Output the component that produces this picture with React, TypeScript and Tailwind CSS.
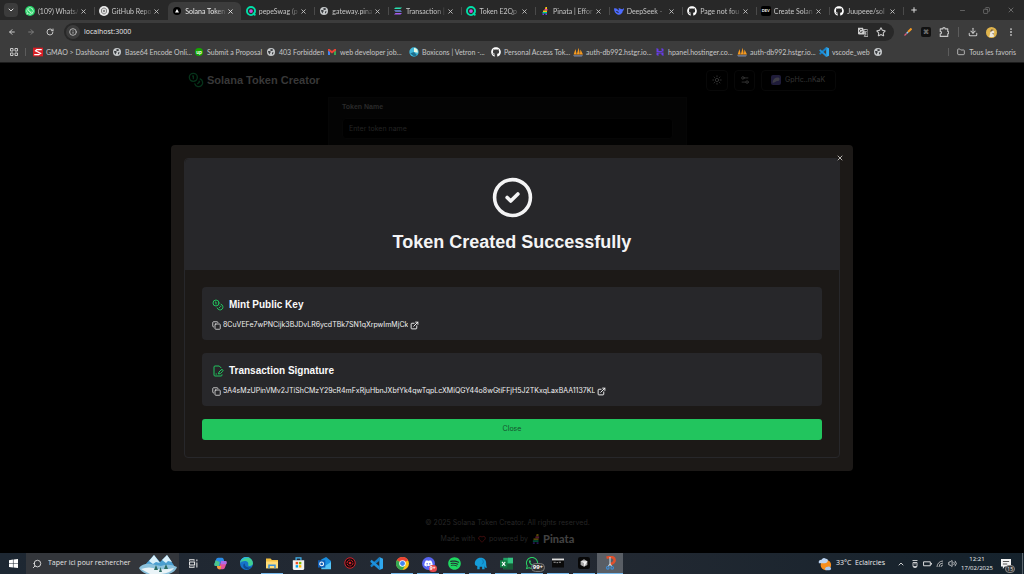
import type { ReactNode } from "react";
import {
  ArrowLeft,
  ArrowRight,
  ChevronDown,
  ChevronUp,
  CircleCheck,
  Coins,
  Copy,
  Download,
  EllipsisVertical,
  ExternalLink,
  Folder,
  Heart,
  Info,
  Minus,
  Plus,
  RotateCw,
  Search,
  Settings2,
  Star,
  Sun,
  Volume2,
  X,
} from "lucide-react";
import { FaGithub, FaWhatsapp, FaSpotify, FaDiscord } from "react-icons/fa";

type P = { className?: string };

const GlobeIcon = ({ className = "size-2" }: P) => (
  <svg viewBox="0 0 16 16" className={className}>
    <circle cx="8" cy="8" r="8" fill="#c4c7c9" />
    <path d="M2 6l4 0 2 2-2 2v3l-3-3zM8 2l4 1-1 3-3 0-2-2zM10 9l3-1-1 4-2 1z" fill="#3a3d40" />
  </svg>
);
const WhatsIcon = () => (
  <span className="flex size-2.5 items-center justify-center rounded-full bg-[#25d366] text-white">
    <FaWhatsapp className="size-2" />
  </span>
);
const GithubIcon = () => <FaGithub className="size-2.5 text-white" />;
const NextIcon = () => (
  <svg viewBox="0 0 16 16" className="size-2">
    <circle cx="8" cy="8" r="8" fill="#000" />
    <path d="M8 4l4 7H4z" fill="#fff" />
  </svg>
);
const RepoIcon = () => (
  <svg viewBox="0 0 16 16" className="size-2.5">
    <circle cx="8" cy="8" r="8" fill="#e9e9e9" />
    <path d="M8 3l4 2.300v5L8 13l-4-2.700v-5z" fill="none" stroke="#777" strokeWidth="1.500" />
    <circle cx="8" cy="8" r="2" fill="#888" />
  </svg>
);
const SolscanIcon = () => (
  <svg viewBox="0 0 16 16" className="size-2.5">
    <circle cx="8" cy="8" r="6.500" fill="none" stroke="#00e0a8" strokeWidth="3" />
    <circle cx="8" cy="8" r="3" fill="#c84bd8" />
    <path d="M11 11l4 4" stroke="#00e0a8" strokeWidth="2.500" />
  </svg>
);
const SolanaIcon = () => (
  <svg viewBox="0 0 16 16" className="size-2">
    <path d="M3 1h13l-3 3H0z" fill="#28e0b0" />
    <path d="M0 6.500h13l3 3H3z" fill="#6c8ee0" />
    <path d="M3 12h13l-3 3H0z" fill="#a45cf0" />
  </svg>
);
const PinataIcon = ({ className = "size-2" }: P) => (
  <svg viewBox="0 0 16 16" className={className}>
    <path d="M9 0h3v4H8z" fill="#f5c518" />
    <path d="M7 4h6v3H7z" fill="#ee4390" />
    <path d="M4 7h8v3H4z" fill="#f5c518" />
    <path d="M3 10h9v3H3z" fill="#00cc92" />
    <path d="M3 13h3v3H3zM9 13h3v3H9z" fill="#6d3be4" />
  </svg>
);
const DeepSeekIcon = () => (
  <svg viewBox="0 0 16 16" className="size-2.5">
    <path d="M0 4c3-1 5 0 7 3 1-1 1-3 0-4 3 0 4 2 6 2 1 0 2-1 3-2 0 3-1 4-2 5 0 3-3 6-6 6C4 14 0 10 0 4z" fill="#4d6bfe" />
    <path d="M3 8c2 0 4 1 5 3-2 0-4-1-5-3z" fill="#282828" />
  </svg>
);
const DevIcon = () => (
  <span className="flex h-2.5 w-2.5 items-center justify-center rounded-xs bg-black text-[4px] font-bold text-white">DEV</span>
);
const GmaoIcon = () => (
  <svg viewBox="0 0 16 16" className="size-2.5">
    <path d="M0 1h16v14H0z" fill="#d91f26" />
    <path d="M14 4H6L4 6l8 4-3 2H2" fill="none" stroke="#fff" strokeWidth="2" />
  </svg>
);
const UpworkIcon = () => (
  <span className="flex size-2 items-center justify-center rounded-full bg-[#14a800] text-[5px] leading-none font-bold text-white">up</span>
);
const GmailIcon = () => (
  <svg viewBox="0 0 16 12" className="size-2">
    <path d="M0 1v11h4V5z" fill="#4285f4" />
    <path d="M16 1v11h-4V5z" fill="#34a853" />
    <path d="M0 0h3l5 4 5-4h3v3L8 9 0 3z" fill="#ea4335" />
  </svg>
);
const BoxiconsIcon = () => (
  <svg viewBox="0 0 16 16" className="size-2.5">
    <circle cx="8" cy="8" r="7.500" fill="#3fb6d8" />
    <path d="M8 1a7 7 0 0 1 6 8L8 8z" fill="#e8f8e0" />
    <path d="M2 10l6-2 5 5-5 2z" fill="#1d6f8c" />
  </svg>
);
const PmaIcon = () => (
  <svg viewBox="0 0 16 16" className="size-2.5">
    <path d="M1 12L4 3l2 9zM6 12L9 1l2 11zM11 12l1-8 4 8z" fill="#f79a1f" />
    <path d="M0 13h16l-2 2H2z" fill="#7b87a6" />
  </svg>
);
const HostingerIcon = () => (
  <svg viewBox="0 0 16 16" className="size-2">
    <path d="M1 0l4 2v4h6l4 2H1zM11 0l4 2v5l-4-2zM1 9h14v7l-4-2v-3H5v5l-4-2z" fill="#673de6" />
  </svg>
);
const VscodeIcon = ({ className = "size-2.5" }: P) => (
  <svg viewBox="0 0 16 16" className={className}>
    <path d="M11.500 0L16 2v12l-4.500 2z" fill="#2fa8ee" />
    <path d="M11.500 0v4.500L2 12.500.500 11V10z" fill="#1580c8" />
    <path d="M11.500 16v-4.500L2 3.500.500 5v1z" fill="#1f92dd" />
  </svg>
);

const tabs: { icon: ReactNode; title: string; active?: boolean }[] = [
  { icon: <WhatsIcon />, title: "(109) Whats/" },
  { icon: <RepoIcon />, title: "GitHub Repo" },
  { icon: <NextIcon />, title: "Solana Token", active: true },
  { icon: <SolscanIcon />, title: "pepeSwag (p" },
  { icon: <GlobeIcon />, title: "gateway.pina" },
  { icon: <SolanaIcon />, title: "Transaction |" },
  { icon: <SolscanIcon />, title: "Token E2Qp" },
  { icon: <PinataIcon />, title: "Pinata | Effor" },
  { icon: <DeepSeekIcon />, title: "DeepSeek -" },
  { icon: <GithubIcon />, title: "Page not fou" },
  { icon: <DevIcon />, title: "Create Solan" },
  { icon: <GithubIcon />, title: "Juupeee/sol" },
];

function TabStrip() {
  return (
    <div className="flex h-5 items-stretch bg-[#282828] font-['Lato',sans-serif]">
      <div className="flex w-[21px] shrink-0 items-center pl-1">
        <button aria-label="Search tabs" className="flex h-3.5 w-3.5 items-center justify-center rounded bg-[#3c3c3c] text-[#e3e3e3]">
          <ChevronDown className="size-2" strokeWidth={3} />
        </button>
      </div>
      <div className="flex min-w-0 flex-1">
        {tabs.map((t, i) => (
          <div key={i} className="flex min-w-0 flex-1 pt-[2px]">
            <div
              className={
                t.active
                  ? "flex min-w-0 flex-1 items-center rounded-t-md bg-[#3c3c3c] pl-1 text-[#e8e8e8]"
                  : "flex min-w-0 flex-1 items-center pl-1 text-[#c7c7c7]"
              }
            >
              <span className="flex w-2.5 shrink-0 justify-center">{t.icon}</span>
              <span className="ml-[3px] min-w-0 flex-1 overflow-hidden text-[7px] leading-3 whitespace-nowrap [mask-image:linear-gradient(to_right,black_75%,rgba(0,0,0,0.2))]">
                {t.title}
              </span>
              <button aria-label="Close tab" className="mr-[7px] ml-0.5 shrink-0">
                <X className="size-[7px]" strokeWidth={3} />
              </button>
            </div>
            <span className={t.active || tabs[i + 1]?.active ? "my-auto h-2 w-px" : "my-auto h-2 w-px bg-[#4a4a4a]"} />
          </div>
        ))}
      </div>
      <div className="flex w-[120px] shrink-0 items-center gap-[17px] pl-1.5 text-[#8a8a8a]">
        <button aria-label="New tab" className="mr-6 text-[#dcdcdc]"><Plus className="size-2" strokeWidth={3} /></button>
        <button aria-label="Minimize"><Minus className="size-[7px]" strokeWidth={2} /></button>
        <button aria-label="Restore"><Copy className="size-[7px] -scale-x-100" strokeWidth={2} /></button>
        <button aria-label="Close window"><X className="size-2" strokeWidth={2} /></button>
      </div>
    </div>
  );
}

function Toolbar() {
  return (
    <div className="flex h-6 items-center bg-[#3c3c3c] pr-2 pl-2 text-[#c7c7c7]">
      <button aria-label="Back"><ArrowLeft className="size-2" strokeWidth={3} /></button>
      <button aria-label="Forward" className="ml-[11px] text-[#7c7c7c]"><ArrowRight className="size-2" strokeWidth={3} /></button>
      <button aria-label="Reload" className="ml-[11px]"><RotateCw className="size-2" strokeWidth={3} /></button>
      <label className="ml-2.5 flex h-[18px] min-w-0 flex-1 items-center rounded-full bg-[#282828] pr-2 pl-0.5">
        <span className="flex size-3.5 items-center justify-center rounded-full bg-[#3c3c3c]"><Info className="size-2" strokeWidth={2.5} /></span>
        <input aria-label="Address" defaultValue="localhost:3000" className="ml-1 min-w-0 flex-1 bg-transparent text-[7px] leading-3 text-[#e8e8e8] outline-none" />
        <svg viewBox="0 0 16 16" className="mr-2 size-2.5">
          <path d="M0 1h8l3 11H2q-2 0-2-2z" fill="#d0d0d0" />
          <path d="M9 4h5q2 0 2 2v9h-6l2-3z" fill="none" stroke="#c7c7c7" strokeWidth="1.400" />
          <path d="M6.500 4.500a2.500 2.500 0 1 0 .500 3H5" fill="none" stroke="#333" strokeWidth="1.300" />
          <path d="M10.500 7.500h4M12.500 6.500v1c0 1.500-1 3-2 4M11.500 9l2.500 3" fill="none" stroke="#c7c7c7" strokeWidth="1.100" />
        </svg>
        <Star className="size-2.5" strokeWidth={2.5} />
      </label>
      <div className="ml-2.5 flex w-28 shrink-0 items-center justify-between">
        <svg viewBox="0 0 16 16" className="size-2">
          <path d="M15 1L8 8" stroke="#f59a23" strokeWidth="4" />
          <path d="M8 8l-3 3" stroke="#8fc8f8" strokeWidth="3" />
          <path d="M5 11l-4 4" stroke="#e05a78" strokeWidth="2.500" />
        </svg>
        <span className="flex size-2.5 items-center justify-center rounded-xs bg-[#111] text-[6px] leading-none text-[#aaa]">⌘</span>
        <svg viewBox="0 0 16 16" className="size-2.5">
          <path d="M2 3h4q0-2 2-2t2 2h4v4q1.500.200 1.500 2T14 11v4H2v-4q2-.200 2-2T2 7z" fill="none" stroke="#c7c7c7" strokeWidth="1.800" strokeLinejoin="round" />
        </svg>
        <span className="h-2.5 w-px bg-[#5c5c5c]" />
        <Download className="size-2.5" strokeWidth={2.5} />
        <svg viewBox="0 0 20 20" className="size-[11px]">
          <circle cx="10" cy="10" r="10" fill="#e0b44c" />
          <path d="M6 18l2-9 3-4 4 3-1 10z" fill="#ece6da" />
          <path d="M7 8l3-4 4 1-4 3zM11 12l3-1v3z" fill="#7b6246" />
        </svg>
        <EllipsisVertical className="size-2.5" strokeWidth={2.5} />
      </div>
    </div>
  );
}

const bookmarks: { icon: ReactNode; label: string; width: string }[] = [
  { icon: <GmaoIcon />, label: "GMAO > Dashboard", width: "w-[79px]" },
  { icon: <GlobeIcon />, label: "Base64 Encode Onli...", width: "w-[82px]" },
  { icon: <UpworkIcon />, label: "Submit a Proposal", width: "w-[72px]" },
  { icon: <GlobeIcon />, label: "403 Forbidden", width: "w-[61px]" },
  { icon: <GmailIcon />, label: "web developer job...", width: "w-[82px]" },
  { icon: <BoxiconsIcon />, label: "Boxicons | Vetron -...", width: "w-[82px]" },
  { icon: <GithubIcon />, label: "Personal Access Tok...", width: "w-[82px]" },
  { icon: <PmaIcon />, label: "auth-db992.hstgr.io...", width: "w-[82px]" },
  { icon: <HostingerIcon />, label: "hpanel.hostinger.co...", width: "w-[82px]" },
  { icon: <PmaIcon />, label: "auth-db992.hstgr.io...", width: "w-[82px]" },
  { icon: <VscodeIcon />, label: "vscode_web", width: "w-[55px]" },
];

function Bookmarks() {
  return (
    <nav aria-label="Bookmarks" className="flex h-[19px] items-center border-b border-[#1c1c1c] bg-[#3c3c3c] pr-2 pb-0.5 pl-2.5 font-['Lato',sans-serif] text-[7px] leading-3 whitespace-nowrap text-[#c7c7c7]">
      <svg viewBox="0 0 16 16" className="size-2 shrink-0">
        <path d="M1 1h5v5H1zM10 1h5v5h-5zM1 10h5v5H1zM10 10h5v5h-5z" fill="none" stroke="#c7c7c7" strokeWidth="2" />
      </svg>
      <span className="mx-[7px] h-2 w-px bg-[#5c5c5c]" />
      {bookmarks.map((b, i) => (
        <a key={i} href="#" className={`${b.width} flex shrink-0 items-center gap-[3px]`}>
          <span className="flex w-2.5 shrink-0 justify-center">{b.icon}</span>
          {b.label}
        </a>
      ))}
      <GlobeIcon />
      <span className="mr-2 ml-auto h-2 w-px bg-[#5c5c5c]" />
      <a href="#" className="flex items-center gap-1"><Folder className="size-2" strokeWidth={2.5} />Tous les favoris</a>
    </nav>
  );
}

function Background() {
  return (
    <div className="flex h-full flex-col">
      <header>
        <div className="mx-auto flex h-[34px] max-w-[648px] items-center">
          <Coins className="size-4 text-[#06331a]" strokeWidth={2} />
          <span className="ml-[3px] text-[11px] leading-4 font-bold text-[#383838]">Solana Token Creator</span>
          <button aria-label="Toggle theme" className="mr-1.5 ml-auto flex h-[21px] w-[22px] items-center justify-center rounded border border-[#080808] text-[#383838]">
            <Sun className="size-2.5" strokeWidth={2} />
          </button>
          <button aria-label="Settings" className="mr-1.5 flex h-[21px] w-[21px] items-center justify-center rounded border border-[#080808] text-[#383838]">
            <Settings2 className="size-2.5" strokeWidth={2} />
          </button>
          <button className="flex h-[21px] w-[75px] items-center gap-1 rounded border border-[#080808] pl-[9px] font-['Inter',sans-serif] text-[7px] text-[#343434]">
            <span className="flex size-2.5 shrink-0 items-center justify-center rounded-xs bg-[#1f1c3a]">
              <svg viewBox="0 0 16 12" className="w-2"><path d="M1 11C2 4 6 1 11 1s5 4 3 6-4 0-6 2-5 3-7 2z" fill="#3c3b44" /></svg>
            </span>
            GpHc..nKaK
          </button>
        </div>
      </header>
      <div className="flex min-h-0 flex-1 flex-col pr-[9px]">
        <main className="mx-auto min-h-0 w-full max-w-[359px] flex-1">
          <div className="h-20 border border-[#060606] bg-[#040404] px-[13px] pt-1">
            <label htmlFor="token-name" className="block text-[7px] leading-2.5 font-bold text-[#2a2a2a]">Token Name</label>
            <input id="token-name" placeholder="Enter token name" className="mt-[6px] block h-[21px] w-full rounded border border-[#060606] bg-black px-1.5 font-['Inter',sans-serif] text-[7px] text-[#444] placeholder:text-[#242424]" />
          </div>
        </main>
        <footer className="pb-1.5 text-center font-['Inter',sans-serif] text-[7px] leading-4 text-[#262626]">
          <p>© 2025 Solana Token Creator. All rights reserved.</p>
          <p className="flex items-center justify-center gap-[3px]">
            Made with <Heart className="size-2 text-[#4a1010]" strokeWidth={2.5} /> powered by
            <span className="flex items-center gap-0.5 font-['Lato'] text-[11px] font-black text-[#414141]">
              <PinataIcon className="size-2.5 opacity-35" />Pinata
            </span>
          </p>
        </footer>
      </div>
    </div>
  );
}

const SignIcon = () => (
  <svg viewBox="0 0 24 24" fill="none" stroke="currentColor" strokeWidth="2" strokeLinecap="round" strokeLinejoin="round" className="size-3">
    <path d="M20 19.500v.500a2 2 0 0 1-2 2H6a2 2 0 0 1-2-2V4a2 2 0 0 1 2-2h8.500L18 5.500" />
    <path d="M8 18h1" />
    <path d="M18.420 9.610a2.100 2.100 0 1 1 2.970 2.970L16.950 17 13 18l.990-3.950 4.430-4.440Z" />
  </svg>
);

function KeyBox({ icon, title, value }: { icon: ReactNode; title: string; value: string }) {
  return (
    <section className="mb-[13px] h-[53px] rounded bg-[#27272a] px-2.5 pt-3">
      <h3 className="flex items-center gap-[5px] text-[10px] leading-3 font-bold text-[#fafafa]">
        <span className="text-[#22c55e]">{icon}</span>
        {title}
      </h3>
      <div className="mt-2 flex h-3 items-center gap-0.5 font-['Inter',sans-serif] text-[7px] leading-3 text-[#f2f2f2]">
        <button aria-label={`Copy ${title}`}><Copy className="size-[9px]" strokeWidth={2} /></button>
        <span className="truncate">{value}</span>
        <a href="#" aria-label={`Open ${title}`}><ExternalLink className="size-[9px]" strokeWidth={2.5} /></a>
      </div>
    </section>
  );
}

function SuccessDialog() {
  return (
    <div className="absolute inset-0 flex items-center justify-center">
      <div role="dialog" aria-labelledby="dialog-title" className="relative w-full max-w-[682px] rounded bg-[#1c1917] p-[13px]">
        <button aria-label="Dismiss" className="absolute top-[9px] right-[9px] text-[#b8b5b2]"><X className="size-2" strokeWidth={3} /></button>
        <div className="rounded border border-[#27272a]">
          <div className="flex h-[111px] flex-col items-center rounded-t bg-[#27272a] pt-[17px] text-[#f4f4f5]">
            <CircleCheck className="size-[43px]" strokeWidth={2} />
            <h2 id="dialog-title" className="mt-[11px] text-[18px] leading-6 font-bold">Token Created Successfully</h2>
          </div>
          <div className="p-[17px]">
            <KeyBox icon={<Coins className="size-3" />} title="Mint Public Key" value="8CuVEFe7wPNCijk3BJDvLR6ycdTBk7SN1qXrpwImMjCk" />
            <KeyBox
              icon={<SignIcon />}
              title="Transaction Signature"
              value="5A4sMzUPinVMv2JTiShCMzY29cR4mFxRjuHbnJXbfYk4qwTqpLcXMiQGY44o8wGtiFFjH5J2TKxqLaxBAA1137KL"
            />
            <button className="block h-[21px] w-full rounded-[3px] bg-[#22c55e] font-['Inter',sans-serif] text-[7px] text-[#14532d]">Close</button>
          </div>
        </div>
      </div>
    </div>
  );
}

const apps: { name: string; icon: ReactNode; open?: boolean; active?: boolean }[] = [
  {
    name: "Copilot",
    icon: (
      <svg viewBox="0 0 16 16" className="size-[13px]">
        <path d="M5 1h5q1.500 0 2 2l.500 2H9L7 11H2Q0 11 .500 8.500L2.500 3Q3 1 5 1z" fill="#2a8de8" />
        <path d="M.500 8.500L2 4l5 2-1 5H2Q0 11 .500 8.500z" fill="#4cc58a" />
        <path d="M11 15H6q-1.500 0-2-2l-.500-2H7l2-6h5q2 0 1.500 2.500L13.500 13q-.500 2-2.500 2z" fill="#e3539a" />
        <path d="M9 5h5q2 0 1.500 2.500L15 9H8z" fill="#b06be8" />
        <path d="M3.500 11H9l-1 4H6q-1.500 0-2-2z" fill="#f3a13b" />
      </svg>
    ),
  },
  {
    name: "Edge",
    icon: (
      <svg viewBox="0 0 16 16" className="size-[13px]">
        <circle cx="8" cy="8" r="8" fill="#1673c9" />
        <path d="M0 8a8 8 0 0 1 16 0c0 3-5 4-6 2 1-3-1-5-4-5-3 0-5 1-6 3z" fill="#41cf94" />
        <path d="M0 8a8 8 0 0 1 12-7C5 1 1 4 0 8z" fill="#2bb5e0" />
        <path d="M6 8c-1 4 4 6 8 4-3 5-10 3-10-1 0-2 1-3 2-3z" fill="#0d4c92" />
      </svg>
    ),
  },
  {
    name: "Explorer",
    open: true,
    icon: (
      <svg viewBox="0 0 16 14" className="h-3 w-3">
        <path d="M0 1h6l2 2h8v11H0z" fill="#f5c242" />
        <path d="M0 5h16v9H0z" fill="#ffdc78" />
        <path d="M3 14V9h10v5h-2v-3H5v3z" fill="#3a8fd8" />
      </svg>
    ),
  },
  {
    name: "Store",
    icon: (
      <svg viewBox="0 0 16 16" className="size-[13px]">
        <path d="M5 4V1h6v3" fill="none" stroke="#45b5f0" strokeWidth="1.500" />
        <path d="M1 4h14v10q0 2-2 2H3q-2 0-2-2z" fill="#f2f2f2" />
        <path d="M4.500 6H7.500v3h-3z" fill="#f25022" /><path d="M8.500 6h3v3h-3z" fill="#7fba00" />
        <path d="M4.500 10h3v3h-3z" fill="#00a4ef" /><path d="M8.500 10h3v3h-3z" fill="#ffb900" />
      </svg>
    ),
  },
  {
    name: "Outlook",
    icon: (
      <svg viewBox="0 0 16 16" className="size-[13px]">
        <path d="M4 3l6-3 6 5v9H4z" fill="#1a8fe0" /><path d="M4 14l12-8v9H4z" fill="#56c4f5" />
        <path d="M0 4h9v9H0z" fill="#0f5db4" /><circle cx="4.500" cy="8.500" r="2.300" fill="none" stroke="#fff" strokeWidth="1.300" />
      </svg>
    ),
  },
  {
    name: "Recorder",
    icon: (
      <svg viewBox="0 0 16 16" className="size-3">
        <circle cx="8" cy="8" r="7" fill="#17090a" stroke="#d0222c" strokeWidth="1.300" />
        <circle cx="8" cy="8" r="4" fill="none" stroke="#d0222c" strokeWidth="1.300" strokeDasharray="3 1" />
        <circle cx="8" cy="8" r="1.800" fill="#d0222c" />
      </svg>
    ),
  },
  { name: "VS Code", icon: <VscodeIcon className="size-[13px]" /> },
  {
    name: "Chrome",
    open: true,
    icon: (
      <svg viewBox="0 0 16 16" className="size-[13px]">
        <circle cx="8" cy="8" r="8" fill="#fbc116" />
        <path d="M8 8L1.070 4A8 8 0 0 1 14.930 4z" fill="#ea4335" />
        <path d="M8 8L1.070 4A8 8 0 0 0 8 16l4-7z" fill="#34a853" />
        <circle cx="8" cy="8" r="4" fill="#fff" /><circle cx="8" cy="8" r="3" fill="#4285f4" />
      </svg>
    ),
  },
  {
    name: "Discord",
    open: true,
    icon: (
      <span className="relative flex size-[13px] items-center justify-center rounded-full bg-[#5865f2] text-white">
        <FaDiscord className="size-[9px]" />
        <span className="absolute -right-0.5 -bottom-0.5 rounded-full bg-[#e5484d] px-px text-[5px] leading-[7px] font-bold">9+</span>
      </span>
    ),
  },
  { name: "Spotify", open: true, icon: <FaSpotify className="size-[13px] text-[#1ed760]" /> },
  {
    name: "TablePlus",
    open: true,
    icon: (
      <svg viewBox="0 0 16 16" className="size-[13px]">
        <path d="M1 8c0-4 3-7 7-7 5 0 7 3 7 7 0 2 0 3 1 5-2 1-3-1-3-3v5h-3v-3H7v3H4v-4c-2 0-3-1-3-3z" fill="#159bd8" />
        <path d="M10 3c2 2 2 4 0 6" fill="none" stroke="#0b6ea8" />
      </svg>
    ),
  },
  {
    name: "Excel",
    open: true,
    icon: (
      <svg viewBox="0 0 16 16" className="size-[13px]">
        <path d="M4 1h12v14H4z" fill="#21a366" /><path d="M10 1h6v7h-6z" fill="#33c481" /><path d="M4 8h12v7H4z" fill="#185c37" />
        <path d="M0 4h9v9H0z" fill="#107c41" /><path d="M2.500 6l4 5M6.500 6l-4 5" stroke="#fff" strokeWidth="1.300" />
      </svg>
    ),
  },
  {
    name: "WhatsApp",
    open: true,
    icon: (
      <span className="relative">
        <FaWhatsapp className="size-3.5 text-[#2bd366]" />
        <span className="absolute -right-1.5 -bottom-0.5 rounded-full border border-[#777] bg-[#333] px-px text-[6px] leading-[7px] font-bold text-white">99+</span>
      </span>
    ),
  },
  {
    name: "Terminal",
    open: true,
    icon: (
      <svg viewBox="0 0 16 14" className="h-3 w-3">
        <path d="M0 1h16v12H0z" fill="#0a0a0a" /><path d="M0 1h16v2.500H0z" fill="#dedede" />
        <path d="M2 6h3M6 6.500h2M9 6h3" stroke="#ccc" />
      </svg>
    ),
  },
  {
    name: "Cursor",
    open: true,
    icon: (
      <svg viewBox="0 0 16 16" className="size-3">
        <rect width="16" height="16" rx="3" fill="#080808" />
        <path d="M8 3l4.500 2.500v5L8 13l-4.500-2.500v-5z" fill="#a8a8a8" /><path d="M3.500 5.500h9L8 13V8z" fill="#f4f4f4" />
      </svg>
    ),
  },
  {
    name: "Snipping Tool",
    open: true,
    active: true,
    icon: (
      <svg viewBox="0 0 16 16" className="size-3.5">
        <path d="M4 2c7-2 10 0 9 4-1 2-3 3-5 3" fill="none" stroke="#e2502b" strokeWidth="3" />
        <path d="M8 1v8l-2 3M8 9l2 3" fill="none" stroke="#c9d4dc" strokeWidth="1.300" />
        <circle cx="5.500" cy="13.500" r="1.500" fill="none" stroke="#3f8fd8" strokeWidth="1.200" />
        <circle cx="10.500" cy="13.500" r="1.500" fill="none" stroke="#3f8fd8" strokeWidth="1.200" />
      </svg>
    ),
  },
];

function Taskbar() {
  return (
    <footer className="flex h-[21px] shrink-0 items-stretch bg-linear-to-r from-[#1d2732] via-[#252a33] to-[#15222c] font-['Open_Sans',sans-serif] text-[#f0f0f0]">
      <button aria-label="Start" className="flex w-[26px] items-center justify-center">
        <svg viewBox="0 0 16 16" className="size-[9px]"><path d="M0 2l7-1v6.500H0zM8 1l8-1v7.500H8zM0 8.500h7V15l-7-1zM8 8.500h8V16l-8-1z" fill="#fff" /></svg>
      </button>
      <label className="flex w-[153px] items-center bg-[#33363b] pl-1.5">
        <Search className="size-2.5 -scale-x-100" strokeWidth={2} />
        <input aria-label="Search" placeholder="Taper ici pour rechercher" className="ml-1.5 min-w-0 flex-1 bg-transparent text-[7px] outline-none placeholder:text-[#e4e4e4]" />
        <svg viewBox="0 0 38 20" className="mr-0.5 h-5 w-[38px]">
          <path d="M4 13L15 1l6 7 7-7 8 12z" fill="#4b9fd0" />
          <path d="M10 7l5-6 6 8-4-1-3 2zM23 6l5-5 5 7-4-1-2 2z" fill="#d9f0fa" />
          <path d="M0 14q4-5 12-4l10 2q8-3 16 1-2 7-14 8H10Q2 18 0 14z" fill="#8cc2dc" />
          <path d="M2 15q8-3 16 0 10 1 17-1-3 5-13 6H11z" fill="#eaf4f8" />
          <path d="M15 16l2-5 2 5zM25 15l2-5 2 5zM20 18l1.500-5 1.500 5z" fill="#2d6b62" />
        </svg>
      </label>
      <button aria-label="Task view" className="flex w-7 items-center justify-center">
        <svg viewBox="0 0 16 16" className="size-[9px]"><path d="M1 3V1.500h8V3M1 13v1.500h8V13M1 5.500h9v5H1zM14 1v3M14 6v9" fill="none" stroke="#eee" strokeWidth="1.800" /></svg>
      </button>
      {apps.map((a) => (
        <button
          key={a.name}
          aria-label={a.name}
          className={a.active ? "flex w-[26px] flex-col bg-[#595e65]" : "flex w-[26px] flex-col px-0.5"}
        >
          <span className="flex flex-1 items-center justify-center self-center">{a.icon}</span>
          <span className={a.open ? "h-px w-full bg-[#76b9ed]" : "h-px w-full"} />
        </button>
      ))}
      <div className="ml-auto flex items-center text-[7px]">
        <svg viewBox="0 0 16 16" className="mr-1 size-3.5">
          <circle cx="9" cy="9" r="6" fill="#f78f1e" />
          <path d="M1 7q-1-4 3-4 2-3 5-1 3 0 2 3-1 2-3 2z" fill="#bcd4f2" />
          <path d="M8 14q0-3 3-3 3-1 4 2 0 2-2 2H9z" fill="#a9c8ee" />
        </svg>
        <span className="whitespace-pre">33°C  Eclaircies</span>
        <ChevronUp className="ml-3 size-2" strokeWidth={2.5} />
        <svg viewBox="0 0 16 16" className="ml-1.5 size-2"><path d="M3 1h10M4 5h8v8H4zM8 5v4M5 15h6" fill="none" stroke="#eee" strokeWidth="1.600" /></svg>
        <svg viewBox="0 0 16 16" className="ml-1 size-[9px]"><path d="M1 5h12v7H1zM15 7v3" fill="none" stroke="#eee" strokeWidth="1.600" /></svg>
        <svg viewBox="0 0 16 16" className="ml-1 size-2"><path d="M2 14A12 12 0 0 1 14 2M6 14a8 8 0 0 1 8-8M10 14a4 4 0 0 1 4-4" fill="none" stroke="#ccc" strokeWidth="1.600" /></svg>
        <Volume2 className="ml-1 size-[9px]" strokeWidth={2} />
        <span className="ml-1 flex w-8 flex-col items-center text-[6px] leading-[9px]"><span>12:21</span><span>17/02/2025</span></span>
        <span className="relative ml-2">
          <svg viewBox="0 0 16 16" className="size-2.5"><path d="M0 0h16v12H6l-3 4v-4H0z" fill="#f4f4f4" /><path d="M3 4h10M3 8h7" stroke="#333" strokeWidth="1.300" /></svg>
          <span className="absolute -right-1 -bottom-1 rounded-full border border-[#888] bg-[#333] px-px text-[5px] leading-[6px]">15</span>
        </span>
        <span className="ml-[11px] h-[21px] w-0.5 border-l border-[#5a646c]" />
      </div>
    </footer>
  );
}

export default function App() {
  return (
    <div className="flex h-screen flex-col overflow-hidden bg-black font-['Liberation_Sans',Arial,sans-serif]">
      <div className="shrink-0 font-['Open_Sans',sans-serif]">
        <TabStrip />
        <Toolbar />
        <Bookmarks />
      </div>
      <div className="relative min-h-0 flex-1">
        <Background />
        <SuccessDialog />
      </div>
      <Taskbar />
    </div>
  );
}
